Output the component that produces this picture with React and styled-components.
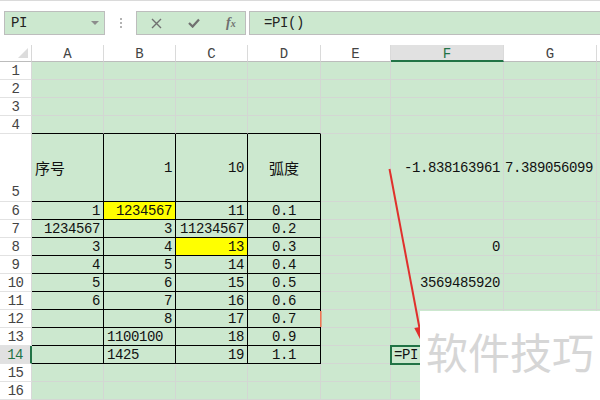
import React from 'react';
import styled, { createGlobalStyle } from 'styled-components';

const GlobalStyle = createGlobalStyle`
  html, body { margin: 0; padding: 0; background: #ffffff; }
  body { font-family: "Liberation Mono", "Noto Sans CJK SC", monospace; }
`;

const SHEET_BG = '#cce8cf';
const GRID = '#d3d7d3';
const XL_GREEN = '#217346';

const Page = styled.div`
  position: relative;
  width: 600px;
  height: 400px;
  overflow: hidden;
  background: #ffffff;
`;

const FormulaBar = styled.div`
  height: 45px;
  box-sizing: border-box;
  border-top: 1px solid #dadada;
  display: flex;
  align-items: flex-start;
  padding: 10px 0 0 4px;
`;

const Field = styled.div`
  box-sizing: border-box;
  height: 24px;
  border: 1px solid #bdbdbd;
  background: ${SHEET_BG};
  display: flex;
  align-items: center;
`;

const NameBox = styled(Field)`
  width: 101px;
  justify-content: space-between;
  padding: 0 5px 0 6px;
  font-size: 14px;
  letter-spacing: -0.4px;
  color: #222;
`;

const DropArrow = styled.span`
  width: 0;
  height: 0;
  border-left: 4px solid transparent;
  border-right: 4px solid transparent;
  border-top: 4px solid #8c8c8c;
`;

const Grip = styled.div`
  width: 31px;
  height: 24px;
  display: flex;
  flex-direction: column;
  align-items: center;
  justify-content: center;
  gap: 2px;
  span {
    width: 2px;
    height: 2px;
    background: #b3b3b3;
  }
`;

const FnBox = styled(Field)`
  width: 110px;
  padding: 0 0 0 14px;
  gap: 26px;
  color: #6f6f6f;
`;

const FxLabel = styled.span`
  font-family: "Liberation Serif", serif;
  font-style: italic;
  font-weight: bold;
  font-size: 14px;
  color: #6f6f6f;
  small { font-size: 10px; }
`;

const FormulaInput = styled(Field)`
  flex: 1;
  margin-left: 3px;
  border-right: none;
  padding-left: 14px;
  font-size: 14px;
  letter-spacing: -0.4px;
  color: #222;
`;

const Sheet = styled.div`
  display: grid;
  grid-template-columns: 32px 72px 72px 72px 73px 70px 113px 93px 1fr;
  grid-template-rows: 17px repeat(4, 18px) 68px repeat(11, 18px);
  background: ${SHEET_BG};
`;

const Corner = styled.div`
  background: #ffffff;
  border-bottom: 1px solid #bcbcbc;
  border-right: 1px solid #d8d8d8;
  display: flex;
  align-items: flex-end;
  justify-content: flex-end;
  padding: 0 3px 3px 0;
  span {
    width: 0;
    height: 0;
    border-left: 10px solid transparent;
    border-bottom: 10px solid #dcdcdc;
  }
`;

const ColHead = styled.div`
  box-sizing: border-box;
  background: ${(p) => (p.$active ? '#e1e1e1' : '#ffffff')};
  border-right: 1px solid #dadada;
  border-bottom: ${(p) => (p.$active ? `2px solid ${XL_GREEN}` : '1px solid #bcbcbc')};
  color: ${(p) => (p.$active ? XL_GREEN : '#444')};
  display: flex;
  align-items: center;
  justify-content: center;
  font-size: 14px;
  padding-top: 2px;
`;

const RowHead = styled.div`
  box-sizing: border-box;
  background: ${(p) => (p.$active ? '#e1e1e1' : '#ffffff')};
  border-bottom: 1px solid #e2e2e2;
  border-right: ${(p) => (p.$active ? `2px solid ${XL_GREEN}` : '1px solid #d8d8d8')};
  color: ${(p) => (p.$active ? XL_GREEN : '#444')};
  display: flex;
  align-items: ${(p) => (p.$tall ? 'flex-end' : 'center')};
  justify-content: center;
  padding-bottom: ${(p) => (p.$tall ? '1px' : '0')};
  font-size: 14px;
  letter-spacing: -0.6px;
`;

const Cell = styled.div`
  box-sizing: border-box;
  min-width: 0;
  background: ${(p) => p.$bg || 'transparent'};
  border-right: 1px solid ${(p) => p.$right};
  border-bottom: 1px solid ${(p) => p.$bottom};
  display: flex;
  align-items: center;
  justify-content: ${(p) =>
    p.$align === 'right' ? 'flex-end' : p.$align === 'center' ? 'center' : 'flex-start'};
  padding: 0 3px;
  white-space: nowrap;
  font-size: 14px;
  letter-spacing: -0.4px;
  color: #111;
  ${(p) =>
    p.$selected &&
    `position: relative; z-index: 1; outline: 2px solid ${XL_GREEN}; outline-offset: -1px;`}
`;

const Cjk = styled.span`
  font-family: "Noto Sans CJK SC", sans-serif;
  font-size: 15px;
  letter-spacing: 0;
`;

const Annotations = styled.svg`
  position: absolute;
  left: 0;
  top: 0;
  width: 600px;
  height: 400px;
  pointer-events: none;
  z-index: 2;
`;

const Watermark = styled.div`
  position: absolute;
  left: 420px;
  top: 311px;
  right: 0;
  bottom: 0;
  z-index: 3;
  background: #ffffff;
  display: flex;
  align-items: flex-start;
  padding: 19px 0 0 6px;
  font-family: "Noto Sans CJK SC", sans-serif;
  font-size: 42px;
  line-height: 1;
  letter-spacing: 0;
  color: #d6d6d6;
`;

const COLS = ['A', 'B', 'C', 'D', 'E', 'F', 'G', ''];
const ROW_COUNT = 16;

const R = (v) => ({ v, al: 'right' });
const L = (v) => ({ v, al: 'left' });
const C = (v) => ({ v, al: 'center' });

const DATA = {
  5: { A: { v: '序号', al: 'left', cjk: true }, B: R('1'), C: R('10'), D: { v: '弧度', al: 'center', cjk: true }, F: R('-1.838163961'), G: R('7.389056099') },
  6: { A: R('1'), B: { v: '1234567', al: 'right', bg: '#ffff00' }, C: R('11'), D: C('0.1') },
  7: { A: R('1234567'), B: R('3'), C: R('11234567'), D: C('0.2') },
  8: { A: R('3'), B: R('4'), C: { v: '13', al: 'right', bg: '#ffff00' }, D: C('0.3'), F: R('0') },
  9: { A: R('4'), B: R('5'), C: R('14'), D: C('0.4') },
  10: { A: R('5'), B: R('6'), C: R('15'), D: C('0.5'), F: R('3569485920') },
  11: { A: R('6'), B: R('7'), C: R('16'), D: C('0.6') },
  12: { B: R('8'), C: R('17'), D: C('0.7') },
  13: { B: L('1100100'), C: R('18'), D: C('0.9') },
  14: { B: L('1425'), C: R('19'), D: C('1.1'), F: { v: '=PI()', al: 'left', selected: true } },
};

const ACTIVE_COL = 'F';
const ACTIVE_ROW = 14;

function borderFor(row, ci) {
  const inTableCol = ci <= 3;
  const inTableRow = row >= 5 && row <= 14;
  return {
    right: inTableCol && inTableRow ? '#000' : GRID,
    bottom: inTableCol && (inTableRow || row === 4) ? '#000' : GRID,
  };
}

function CrossIcon() {
  return (
    <svg width="11" height="11" viewBox="0 0 11 11">
      <path d="M1 1 L10 10 M10 1 L1 10" stroke="#707070" strokeWidth="1.4" fill="none" />
    </svg>
  );
}

function CheckIcon() {
  return (
    <svg width="12" height="10" viewBox="0 0 12 10">
      <path d="M1 5 L4.6 8.6 L11 1.5" stroke="#707070" strokeWidth="2.2" fill="none" />
    </svg>
  );
}

export default function App() {
  const rows = [];
  for (let r = 1; r <= ROW_COUNT; r++) {
    rows.push(
      <RowHead key={`h${r}`} $active={r === ACTIVE_ROW} $tall={r === 5}>
        {r}
      </RowHead>
    );
    COLS.forEach((col, ci) => {
      const d = (DATA[r] && DATA[r][col]) || null;
      const b = borderFor(r, ci);
      rows.push(
        <Cell
          key={`c${r}-${ci}`}
          $right={b.right}
          $bottom={b.bottom}
          $align={d ? d.al : 'left'}
          $bg={d && d.bg}
          $selected={d && d.selected}
        >
          {d ? d.cjk ? <Cjk>{d.v}</Cjk> : d.v : null}
        </Cell>
      );
    });
  }

  return (
    <Page>
      <GlobalStyle />
      <FormulaBar>
        <NameBox>
          PI
          <DropArrow />
        </NameBox>
        <Grip>
          <span />
          <span />
          <span />
        </Grip>
        <FnBox>
          <CrossIcon />
          <CheckIcon />
          <FxLabel>
            f<small>x</small>
          </FxLabel>
        </FnBox>
        <FormulaInput>=PI()</FormulaInput>
      </FormulaBar>
      <Sheet>
        <Corner>
          <span />
        </Corner>
        {COLS.map((col, i) => (
          <ColHead key={`ch${i}`} $active={col === ACTIVE_COL}>
            {col}
          </ColHead>
        ))}
        {rows}
      </Sheet>
      <Annotations viewBox="0 0 600 400">
        <line x1="389.5" y1="169" x2="419.5" y2="328" stroke="#e0302c" strokeWidth="2" />
        <polygon points="422.5,344 424.3,326.3 414.3,328.1" fill="#e0302c" />
        <rect x="320" y="311" width="1.6" height="16" fill="#ef7656" />
      </Annotations>
      <Watermark>软件技巧</Watermark>
    </Page>
  );
}
